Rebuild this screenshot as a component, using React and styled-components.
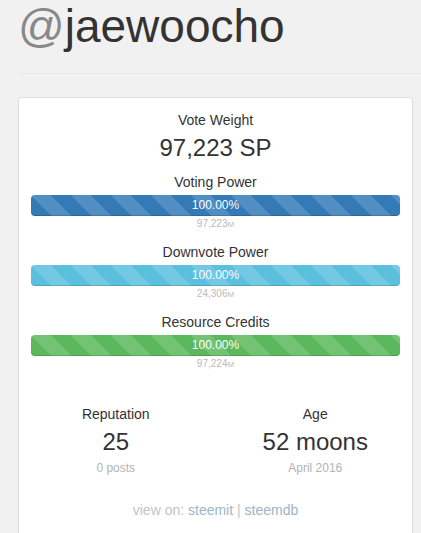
import styled, { createGlobalStyle } from 'styled-components'

const GlobalStyle = createGlobalStyle`
  body {
    margin: 0;
    background: #f1f1f1;
    font-family: "Liberation Sans", Arial, Helvetica, sans-serif;
    color: #333;
  }
`

const Page = styled.div`
  padding-left: 18px;
`

const Header = styled.h1`
  margin: 0;
  padding: 1px 0 21px;
  font-size: 46px;
  font-weight: normal;
  line-height: 51px;
  color: #333;
  border-bottom: 1px solid #e6e6e6;
`

const At = styled.span`
  color: #888;
`

const Panel = styled.div`
  margin: 23px 8px 0 0;
  background: #fff;
  border: 1px solid #ddd;
  border-radius: 4px;
  box-shadow: 0 1px 1px rgba(0, 0, 0, 0.05);
  padding: 12px 12px 20px;
  text-align: center;
`

const Label = styled.div`
  font-size: 14px;
  line-height: 20px;
  color: #333;
`

const BigValue = styled.div`
  margin-top: 5px;
  font-size: 24px;
  line-height: 26px;
  color: #333;
`

const Meter = styled.div`
  margin-top: ${(p) => (p.$first ? '11px' : '10px')};
`

const Bar = styled.div`
  margin-top: 3px;
  height: 21px;
  border-radius: 4px;
  background-color: ${(p) => p.$color};
  background-image: linear-gradient(
    45deg,
    rgba(255, 255, 255, 0.15) 25%,
    transparent 25%,
    transparent 50%,
    rgba(255, 255, 255, 0.15) 50%,
    rgba(255, 255, 255, 0.15) 75%,
    transparent 75%,
    transparent
  );
  background-size: 40px 40px;
  box-shadow: inset 0 -1px 0 rgba(0, 0, 0, 0.15);
  color: #fff;
  font-size: 12px;
  line-height: 21px;
`

const Sub = styled.div`
  margin-top: 1px;
  font-size: 10px;
  line-height: 14px;
  color: #bbb;
`

const Unit = styled.span`
  font-size: 8px;
`

const Stats = styled.div`
  margin: 32px -15px 0;
  display: grid;
  grid-template-columns: 1fr 1fr;
`

const Stat = styled.div`
  text-align: center;
`

const StatSub = styled.div`
  margin-top: 5px;
  font-size: 12px;
  line-height: 17px;
  color: #b3b3b3;
`

const Footer = styled.div`
  margin-top: 23px;
  font-size: 14px;
  line-height: 20px;
  color: #c4c4c4;
`

const Link = styled.a`
  color: #9cb5c9;
  text-decoration: none;
`

const meters = [
  { name: 'Voting Power', color: '#337ab7', value: '97,223' },
  { name: 'Downvote Power', color: '#5bc0de', value: '24,306' },
  { name: 'Resource Credits', color: '#5cb85c', value: '97,224' }
]

export default function App() {
  return (
    <Page>
      <GlobalStyle />
      <Header>
        <At>@</At>jaewoocho
      </Header>
      <Panel>
        <Label>Vote Weight</Label>
        <BigValue>97,223 SP</BigValue>
        {meters.map((m, i) => (
          <Meter key={m.name} $first={i === 0}>
            <Label>{m.name}</Label>
            <Bar $color={m.color}>100.00%</Bar>
            <Sub>
              {m.value}
              <Unit>M</Unit>
            </Sub>
          </Meter>
        ))}
        <Stats>
          <Stat>
            <Label>Reputation</Label>
            <BigValue>25</BigValue>
            <StatSub>0 posts</StatSub>
          </Stat>
          <Stat>
            <Label>Age</Label>
            <BigValue>52 moons</BigValue>
            <StatSub>April 2016</StatSub>
          </Stat>
        </Stats>
        <Footer>
          view on: <Link href="#">steemit</Link> | <Link href="#">steemdb</Link>
        </Footer>
      </Panel>
    </Page>
  )
}
